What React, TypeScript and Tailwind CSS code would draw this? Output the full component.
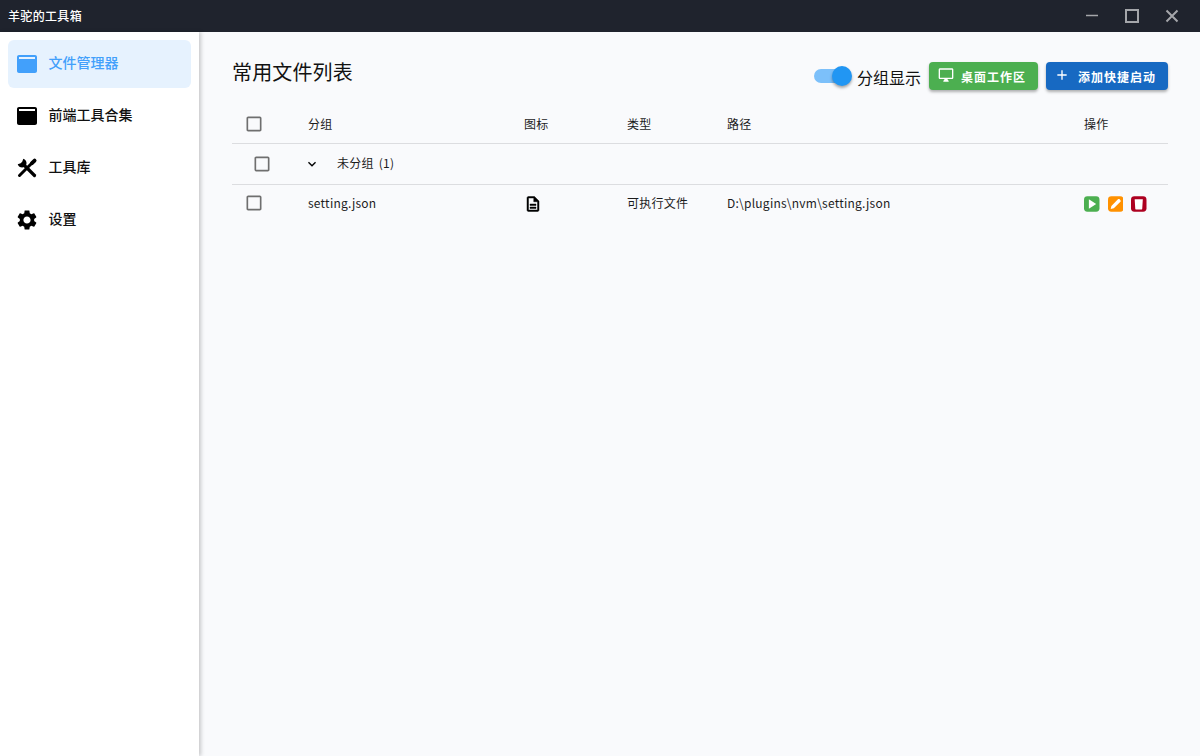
const FONT = "font-['Noto_Sans_CJK_SC','Noto_Sans',sans-serif]";

function Icon({ d, className }: { d: string; className?: string }) {
  return (
    <svg viewBox="0 0 24 24" fill="currentColor" className={className}>
      <path d={d} />
    </svg>
  );
}

const CHECKBOX = "M19 5v14H5V5h14m0-2H5c-1.1 0-2 .9-2 2v14c0 1.1.9 2 2 2h14c1.1 0 2-.9 2-2V5c0-1.1-.9-2-2-2z";
const GEAR = "M19.14 12.94c.04-.3.06-.61.06-.94 0-.32-.02-.64-.07-.94l2.03-1.58c.18-.14.23-.41.12-.61l-1.92-3.32c-.12-.22-.37-.29-.59-.22l-2.39.96c-.5-.38-1.03-.7-1.62-.94l-.36-2.54c-.04-.24-.24-.41-.48-.41h-3.84c-.24 0-.43.17-.47.41l-.36 2.54c-.59.24-1.13.57-1.62.94l-2.39-.96c-.22-.08-.47 0-.59.22L2.74 8.87c-.12.21-.08.47.12.61l2.03 1.58c-.05.3-.09.63-.09.94s.02.64.07.94l-2.03 1.58c-.18.14-.23.41-.12.61l1.92 3.32c.12.22.37.29.59.22l2.39-.96c.5.38 1.03.7 1.62.94l.36 2.54c.05.24.24.41.48.41h3.84c.24 0 .44-.17.47-.41l.36-2.54c.59-.24 1.13-.56 1.62-.94l2.39.96c.22.08.47 0 .59-.22l1.92-3.32c.12-.22.07-.47-.12-.61l-2.01-1.58zM12 15.6c-1.98 0-3.6-1.62-3.6-3.6s1.62-3.6 3.6-3.6 3.6 1.62 3.6 3.6-1.62 3.6-3.6 3.6z";
const DOC = "M8 16h8v2H8zm0-4h8v2H8zm6-10H6c-1.1 0-2 .9-2 2v16c0 1.1.89 2 1.99 2H18c1.1 0 2-.9 2-2V8l-6-6zm4 18H6V4h7v5h5v11z";
const DESKTOP = "M21 2H3c-1.1 0-2 .9-2 2v12c0 1.1.9 2 2 2h7l-2 3v1h8v-1l-2-3h7c1.1 0 2-.9 2-2V4c0-1.1-.9-2-2-2zm0 14H3V4h18v12z";
const ADD = "M19 13h-6v6h-2v-6H5v-2h6V5h2v6h6v2z";
const CHEVRON = "M16.59 8.59 12 13.17 7.41 8.59 6 10l6 6 6-6z";

function WindowIcon({ className }: { className?: string }) {
  return (
    <svg viewBox="0 0 24 24" className={className}>
      <path fill="currentColor" fillRule="evenodd" d="M4 3h16c1.1 0 2 .9 2 2v14c0 1.1-.9 2-2 2H4c-1.1 0-2-.9-2-2V5c0-1.1.9-2 2-2zm0 2v2h16V5H4z" />
    </svg>
  );
}

// wrench over a screwdriver, crossed
function ToolsIcon({ className }: { className?: string }) {
  return (
    <svg viewBox="0 0 24 24" className={className} fill="none" stroke="currentColor">
      <path d="M9 9l10.5 10.5" strokeWidth="3.2" strokeLinecap="round" />
      <path d="M4.5 19.5L17 7" strokeWidth="3" strokeLinecap="round" />
      <path d="M17 7.2l2.6-2.6" strokeWidth="3.8" strokeLinecap="round" />
      <path d="M8.3 2.7A4.5 4.5 0 1 1 2.7 8.3L5.7 7.2 7.2 5.7z" fill="currentColor" stroke="none" />
    </svg>
  );
}

function NavItem({ label, active, children }: { label: string; active?: boolean; children: React.ReactNode }) {
  return (
    <div className={`flex h-12 items-center gap-[10px] rounded-md pl-[7px] text-sm font-medium tracking-normal ${active ? "bg-[#e6f2fe] text-[#42a0fb]" : "text-[#111]"}`}>
      {children}
      <span className="-ml-[0.5px] pb-1">{label}</span>
    </div>
  );
}

function Check() {
  return <Icon d={CHECKBOX} className="h-5 w-5 text-[#6f6f6f]" />;
}

export default function App() {
  return (
    <div className={`flex h-[756px] w-[1200px] flex-col overflow-hidden bg-[#f9fafc] text-xs tracking-[0.24px] text-[#1c1c1c] ${FONT}`}>
      {/* title bar */}
      <div className="flex h-8 shrink-0 items-center justify-between bg-[#1f232d] pl-2 pr-[18px] text-white">
        <span className="text-xs font-medium tracking-[0.33px]">羊驼的工具箱</span>
        <div className="flex items-center gap-5 text-[#a4a6aa]">
          <svg viewBox="0 0 20 20" className="h-5 w-5" stroke="currentColor" strokeWidth="1.5" fill="none"><path d="M4 9.5h12" /></svg>
          <svg viewBox="0 0 20 20" className="h-5 w-5" stroke="currentColor" strokeWidth="2" fill="none"><rect x="4" y="4" width="12" height="12" /></svg>
          <svg viewBox="0 0 20 20" className="h-5 w-5" stroke="currentColor" strokeWidth="2" fill="none"><path d="M4.5 4.5l11 11M15.5 4.5l-11 11" /></svg>
        </div>
      </div>

      <div className="flex min-h-0 flex-1">
        {/* sidebar */}
        <div className="z-10 flex w-[199px] shrink-0 flex-col gap-1 bg-white pb-2 pl-2 pr-2 pt-2 shadow-[2px_0_4px_rgba(0,0,0,0.2)]">
          <NavItem label="文件管理器" active><WindowIcon className="h-6 w-6" /></NavItem>
          <NavItem label="前端工具合集"><WindowIcon className="h-6 w-6 text-black" /></NavItem>
          <NavItem label="工具库"><ToolsIcon className="h-6 w-6 text-black" /></NavItem>
          <NavItem label="设置"><Icon d={GEAR} className="h-6 w-6 text-black" /></NavItem>
        </div>

        {/* content */}
        <div className="flex-1 pl-[33px] pr-8 pt-[30px]">
          <div className="flex h-[30px] items-start justify-between">
            <h1 className="-mt-1 text-xl font-normal tracking-[0.15px] text-[#111]">常用文件列表</h1>
            <div className="flex h-7 items-center">
              <div className="relative mr-[7px] h-[14px] w-[36px] rounded-full bg-[#7cc0fa]">
                <div className="absolute -top-[3px] left-[18px] h-5 w-5 rounded-full bg-[#2196f3] shadow-[0_2px_3px_rgba(0,0,0,0.35)]" />
              </div>
              <span className="mr-2 mt-[2px] text-base tracking-normal text-[#111]">分组显示</span>
              <button className="mr-2 flex h-7 w-[109px] items-center rounded bg-[#4caf50] pl-[9px] text-xs font-bold tracking-[1px] text-white shadow-[0_2px_3px_rgba(0,0,0,0.3)]">
                <Icon d={DESKTOP} className="mb-[2px] mr-[7px] h-4 w-4" />
                <span className="pt-[2px]">桌面工作区</span>
              </button>
              <button className="flex h-7 w-[122px] items-center rounded bg-[#1769c2] pl-[8px] text-xs font-bold tracking-[1px] text-white shadow-[0_2px_3px_rgba(0,0,0,0.3)]">
                <Icon d={ADD} className="mb-[3px] mr-2 h-4 w-4" />
                <span className="pt-[2px]">添加快捷启动</span>
              </button>
            </div>
          </div>

          {/* table */}
          <div className="mt-2">
            <div className="flex h-[44px] items-center border-b border-[#dcdde0] pt-1">
              <div className="w-[76px] pl-3"><Check /></div>
              <div className="w-[216px]">分组</div>
              <div className="w-[103px]">图标</div>
              <div className="w-[100px]">类型</div>
              <div className="w-[357px]">路径</div>
              <div>操作</div>
            </div>
            <div className="flex h-[41px] items-center border-b border-[#dcdde0]">
              <div className="w-[72px] pl-5"><Check /></div>
              <Icon d={CHEVRON} className="h-4 w-4 text-black" />
              <span className="mb-[2px] ml-[17px]">未分组<span className="ml-[5px]">(1)</span></span>
            </div>
            <div className="flex h-[38px] items-center">
              <div className="mb-[2px] w-[76px] pl-3"><Check /></div>
              <div className="mb-[2px] w-[216px]">setting.json</div>
              <div className="w-[103px]"><Icon d={DOC} className="h-[18px] w-[18px] stroke-current stroke-[0.6] text-black" /></div>
              <div className="mb-[2px] w-[100px]">可执行文件</div>
              <div className="mb-[2px] w-[357px]">D:\plugins\nvm\setting.json</div>
              <div className="flex gap-2">
                <svg viewBox="0 0 16 16" className="h-4 w-[15.5px]">
                  <rect width="16" height="16" rx="3.5" fill="#4caf50" />
                  <path d="M5 3.2v9.6l7.6-4.8z" fill="#fff" />
                </svg>
                <svg viewBox="0 0 16 16" className="h-4 w-[15.5px]">
                  <rect width="16" height="16" rx="3.5" fill="#ff9100" />
                  <path d="M2.8 13.2l.7-3.2 6.8-6.8c.5-.5 1.2-.5 1.7 0l.8.8c.5.5.5 1.2 0 1.7L6 12.5z" fill="#fff" />
                </svg>
                <svg viewBox="0 0 16 16" className="h-4 w-[15.5px]">
                  <rect width="16" height="16" rx="3.5" fill="#ad0020" />
                  <path d="M3.8 3h8.4l-.6 10c0 .4-.3.6-.6.6H5c-.3 0-.6-.2-.6-.6z" fill="#fff" />
                </svg>
              </div>
            </div>
          </div>
        </div>
      </div>
    </div>
  );
}
